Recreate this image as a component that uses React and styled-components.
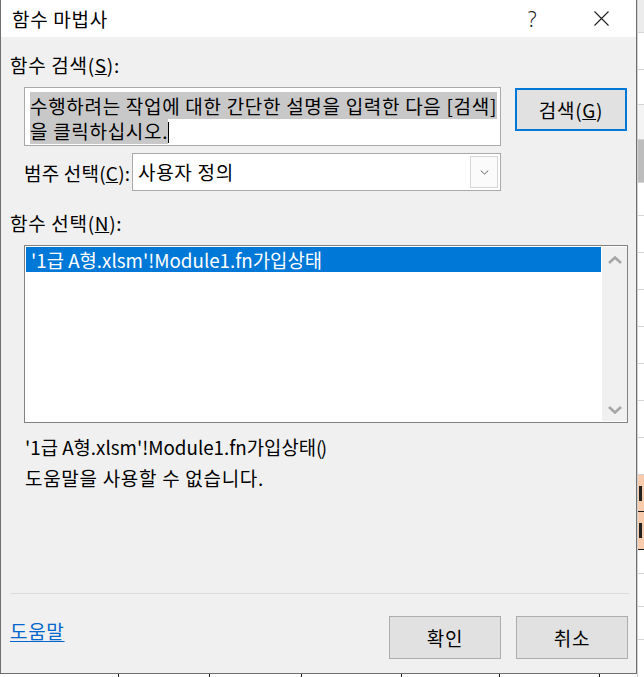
import styled, { createGlobalStyle } from "styled-components";

const GlobalStyle = createGlobalStyle`
    html, body {
        margin: 0;
        padding: 0;
        background: #ffffff;
    }
    * {
        box-sizing: border-box;
    }
`

const Sheet = styled.div`
    width: 644px;
    height: 677px;
    display: flex;
    overflow: hidden;
    font-family: "Noto Sans CJK KR", "Noto Sans", sans-serif;
    font-size: 19px;
    letter-spacing: 0.7px;
    color: #000000;
`
const LeftColumn = styled.div`
    width: 637px;
    display: flex;
    flex-direction: column;
`
const Dialog = styled.div`
    width: 637px;
    height: 674px;
    flex-shrink: 0;
    display: flex;
    flex-direction: column;
    background: #f0f0f0;
    border: 1px solid #6f6f6f;
    border-top: none;
`
const TitleBar = styled.div`
    height: 37px;
    display: flex;
    align-items: center;
    background: #ffffff;
    padding-left: 11px;
`
const Title = styled.span`
    line-height: 24px;
    flex: 1;
`
const TitleButton = styled.div`
    width: 69px;
    height: 37px;
    display: flex;
    align-items: center;
    justify-content: center;
    font-family: "Noto Sans", sans-serif;
    font-weight: 300;
    font-size: 21px;
    color: #1f1f1f;
`
const Body = styled.div`
    flex: 1;
    display: flex;
    flex-direction: column;
    padding: 0 8px 14px 9px;
`
const Label = styled.div`
    line-height: 24px;
    margin-top: ${p => p.$top}px;
`
const Indent = styled.div`
    margin-left: 14px;
`
const SearchRow = styled(Indent)`
    display: flex;
    align-items: flex-start;
    gap: 14px;
    margin-top: 10px;
`
const TextBox = styled.div`
    width: 477px;
    height: 59px;
    background: #ffffff;
    border: 1px solid #a9a9a9;
    padding: 5px 4px 0 5px;
    line-height: 25px;
    white-space: nowrap;
    overflow: hidden;
`
const Selected = styled.span`
    background: #c8c8c8;
`
const Caret = styled.span`
    display: inline-block;
    width: 1px;
    height: 21px;
    background: #000000;
    vertical-align: -4px;
`
const Button = styled.div`
    width: 112px;
    height: ${p => p.$h}px;
    display: flex;
    align-items: center;
    justify-content: center;
    background: #e1e1e1;
    border: ${p => p.$default ? "2px solid #0078d7" : "1px solid #adadad"};
    margin-top: ${p => p.$top || 0}px;
    line-height: 24px;
`
const CategoryRow = styled(Indent)`
    width: 477px;
    display: flex;
    align-items: center;
    justify-content: space-between;
    margin-top: 7px;
`
const CategoryLabel = styled.span`
    letter-spacing: 0.2px;
    white-space: nowrap;
`
const Select = styled.div`
    width: 369px;
    height: 38px;
    display: flex;
    align-items: center;
    background: #ffffff;
    border: 1px solid #a9a9a9;
    padding: 2px;
`
const SelectValue = styled.span`
    flex: 1;
    padding-left: 3px;
    line-height: 24px;
`
const SelectArrow = styled.div`
    width: 28px;
    height: 100%;
    display: flex;
    align-items: center;
    justify-content: center;
    background: #fbfbfb;
    border: 1px solid #d6d6d6;
`
const ListBox = styled(Indent)`
    width: 604px;
    height: 178px;
    margin-top: 10px;
    display: flex;
    background: #ffffff;
    border: 1px solid #828282;
    padding: 1px 0 1px 1px;
`
const ListItems = styled.div`
    flex: 1;
`
const ListItem = styled.div`
    height: 25px;
    line-height: 25px;
    padding-left: 5px;
    font-size: 18.8px;
    letter-spacing: 0;
    background: ${p => p.$active ? "#0078d7" : "transparent"};
    color: ${p => p.$active ? "#ffffff" : "#000000"};
    white-space: nowrap;
`
const ScrollBar = styled.div`
    width: 25px;
    display: flex;
    flex-direction: column;
    justify-content: space-between;
    align-items: center;
    background: #f0f0f0;
    padding: 9px 0 7px;
    margin-left: 1px;
`
const Description = styled(Indent)`
    margin-top: 8px;
    margin-left: 15px;
    line-height: 31px;
`
const Signature = styled.div`
    font-size: 18.8px;
    letter-spacing: 0;
`
const Parens = styled.span`
    letter-spacing: -1.5px;
`
const Separator = styled.div`
    margin-top: auto;
    height: 1px;
    background: #dadada;
    margin-right: -1px;
`
const Footer = styled.div`
    display: flex;
    align-items: flex-start;
    gap: 15px;
    margin-top: 22px;
`
const HelpLink = styled.a`
    margin-top: 3px;
    margin-right: auto;
    line-height: 24px;
    color: #0066cc;
    text-decoration: underline;
    text-underline-offset: 2px;
`
const BottomStrip = styled.div`
    flex: 1;
    display: flex;
`
const ColumnCell = styled.div`
    width: ${p => p.$w}px;
    border-right: 1px solid #1a1a1a;
`
const Edge = styled.div`
    flex: 1;
    display: flex;
    flex-direction: column;
    border-left: 1px solid #d0d0d0;
`
const RowCell = styled.div`
    height: ${p => p.$h}px;
    flex-shrink: 0;
    display: flex;
    align-items: center;
    background: ${p => p.$bg || "#ffffff"};
    border-bottom: 1px solid ${p => p.$line || "#d4d4d4"};
`
const CellMark = styled.div`
    width: 3px;
    height: 15px;
    margin-left: 1px;
    border-left: 2px solid #222222;
    border-right: 1px solid #222222;
`

const Chevron = ({ up, thick }) => (
    <svg width={thick ? 14 : 9} height={thick ? 8 : 5} viewBox="0 0 14 8">
        <path
            d={up ? "M1 7 L7 1.5 L13 7" : "M1 1 L7 6.5 L13 1"}
            fill="none"
            stroke={thick ? "#a6a6a6" : "#5f5f5f"}
            strokeWidth={thick ? 2.6 : 1.6}
        />
    </svg>
)

const CloseIcon = () => (
    <svg width="15" height="15" viewBox="0 0 15 15">
        <path d="M0.5 0.5 L14.5 14.5 M14.5 0.5 L0.5 14.5" stroke="#1f1f1f" strokeWidth="1.1" />
    </svg>
)

const edgeRows = [
    { h: 33, bg: "#ececec" },
    { h: 37 }, { h: 35 }, { h: 35, bg: "#f4f4f4" },
    { h: 43, bg: "#bdbdbd" },
    { h: 33 }, { h: 37 }, { h: 37 }, { h: 37 }, { h: 37 }, { h: 37 }, { h: 37 }, { h: 37 },
    { h: 37, bg: "#f8cbad", line: "#1a1a1a", mark: true },
    { h: 38, bg: "#f8cbad", line: "#1a1a1a", mark: true },
    { h: 24 }, { h: 33 }, { h: 33 }, { h: 40 },
]

const App = () => {
    return (
        <>
            <GlobalStyle />
            <Sheet>
                <LeftColumn>
                    <Dialog>
                        <TitleBar>
                            <Title>함수 마법사</Title>
                            <TitleButton>?</TitleButton>
                            <TitleButton><CloseIcon /></TitleButton>
                        </TitleBar>
                        <Body>
                            <Label $top={16}>함수 검색(<u>S</u>):</Label>
                            <SearchRow>
                                <TextBox>
                                    <Selected>수행하려는 작업에 대한 간단한 설명을 입력한 다음 [검색]</Selected>
                                    <br />
                                    <Selected>을 클릭하십시오.</Selected><Caret />
                                </TextBox>
                                <Button $default $h={43} $top={1}>검색(<u>G</u>)</Button>
                            </SearchRow>
                            <CategoryRow>
                                <CategoryLabel>범주 선택(<u>C</u>):</CategoryLabel>
                                <Select>
                                    <SelectValue>사용자 정의</SelectValue>
                                    <SelectArrow><Chevron /></SelectArrow>
                                </Select>
                            </CategoryRow>
                            <Label $top={20}>함수 선택(<u>N</u>):</Label>
                            <ListBox>
                                <ListItems>
                                    <ListItem $active>'1급 A형.xlsm'!Module1.fn가입상태</ListItem>
                                </ListItems>
                                <ScrollBar>
                                    <Chevron up thick />
                                    <Chevron thick />
                                </ScrollBar>
                            </ListBox>
                            <Description>
                                <Signature>'1급 A형.xlsm'!Module1.fn가입상태<Parens>()</Parens></Signature>
                                <div>도움말을 사용할 수 없습니다.</div>
                            </Description>
                            <Separator />
                            <Footer>
                                <HelpLink href="#">도움말</HelpLink>
                                <Button $h={43}>확인</Button>
                                <Button $h={43}>취소</Button>
                            </Footer>
                        </Body>
                    </Dialog>
                    <BottomStrip>
                        {[119, 91, 92, 100, 98, 100].map((w, i) => (
                            <ColumnCell key={i} $w={w} />
                        ))}
                    </BottomStrip>
                </LeftColumn>
                <Edge>
                    {edgeRows.map((r, i) => (
                        <RowCell key={i} $h={r.h} $bg={r.bg} $line={r.line}>
                            {r.mark && <CellMark />}
                        </RowCell>
                    ))}
                </Edge>
            </Sheet>
        </>
    )
}

export default App;
